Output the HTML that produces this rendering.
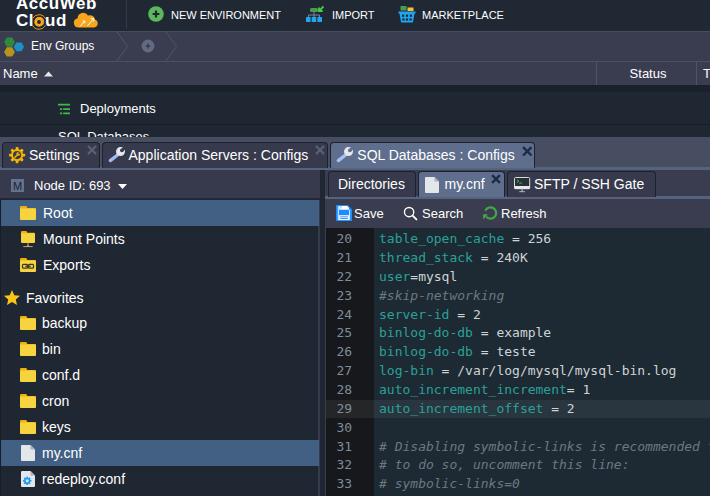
<!DOCTYPE html>
<html><head><meta charset="utf-8">
<style>
*{box-sizing:border-box;margin:0;padding:0}
html,body{width:710px;height:496px;overflow:hidden;background:#1f2832;font-family:"Liberation Sans",sans-serif;color:#fff}
.abs{position:absolute;white-space:nowrap}
svg{position:absolute;overflow:visible}
#hdr{position:absolute;left:0;top:0;width:710px;height:31px;background:#1f2833;overflow:hidden}
#hdr .div{position:absolute;left:126px;top:0;width:1px;height:29px;background:#343a4b}
.menu{position:absolute;top:9px;font-size:11px;color:#fff;white-space:nowrap}
.logo{position:absolute;left:16px;font-weight:bold;font-size:17px;line-height:17px;letter-spacing:.55px;color:#fff;white-space:nowrap;font-family:"Liberation Sans",sans-serif}
#crumb{position:absolute;left:0;top:31px;width:710px;height:30px;background:#3a3d4f;border-top:1px solid #484c60}
#thead{position:absolute;left:0;top:61px;width:710px;height:24px;background:#3a3d4f;border-top:1px solid #4b4f64}
#rows{position:absolute;left:0;top:85px;width:710px;height:52px;background:#1f2832;overflow:hidden}
#panelbar{position:absolute;left:0;top:137px;width:710px;height:33px;background:#474e62}
#panelbar .strip{position:absolute;left:0;top:30px;width:710px;height:3px;background:#56637f}
.tab{position:absolute;top:5px;height:26px;background:#363a4c;border:1px solid #1c2130;border-bottom:none;border-radius:4px 4px 0 0;font-size:14px;color:#fff;white-space:nowrap}
.tab.act{background:#5e6e8c;border-color:#1c2130}
#left{position:absolute;left:0;top:170px;width:320px;height:326px;background:#1f2733}
#lefthdr{position:absolute;left:0;top:0;width:320px;height:29px;background:#363a4c;border-bottom:1px solid #23283a}
.ti{position:absolute;left:1px;width:318px;padding-left:1px;height:26px;font-size:14px;line-height:26px;color:#fff;white-space:nowrap}
.ti.sel{background:#416084}
.ti>*{margin-left:1px}
#right{position:absolute;left:325px;top:170px;width:385px;height:326px;background:#3a3d4f}
#subbar{position:absolute;left:0;top:0;width:385px;height:29px;background:#3a3d4f}
#subbar .strip{position:absolute;left:0;top:26px;width:385px;height:3px;background:#56637f}
.stab{position:absolute;top:1px;height:26px;background:#363a4c;border:1px solid #1c2130;border-bottom:none;border-radius:4px 4px 0 0;font-size:14px;color:#fff}
.stab.act{background:#5e6e8c}
#tool{position:absolute;left:1px;top:29px;width:384px;height:29px;background:#3a3d4f;font-size:13px}
#code{position:absolute;left:1px;top:58px;width:384px;height:268px;background:#1d2a33;font-family:"DejaVu Sans Mono","Liberation Mono",monospace;font-size:13px;overflow:hidden}
#gut{position:absolute;left:0;top:0;width:48px;height:268px;background:#17181b}
.ln{position:absolute;left:0;width:384px;height:19px;line-height:19px;white-space:pre;margin-top:1px}
.ln .n{position:absolute;left:10.500px;color:#7f8d9a}
.ln .t{position:absolute;left:53px;color:#cfd3d6}
.k{color:#2aa198}.ln .c{color:#6b7883;font-style:italic}
</style></head><body>
<svg width="0" height="0" style="position:absolute"><defs>
<symbol id="fold" viewBox="0 0 16 14"><path d="M0 1.2q0-1.2 1.2-1.2h4.6q.8 0 1.2 1.2l.3.8h7.5q1.2 0 1.2 1.2v1h-16z" fill="#f2b10a"/><rect x="0" y="2.6" width="16" height="11.4" rx="1" fill="#f6d43f"/></symbol>
<symbol id="file" viewBox="0 0 14 16"><path d="M1 0h8.5l4.5 4.5v10.5q0 1-1 1h-12q-1 0-1-1v-14q0-1 1-1z" fill="#e4e7ea"/><path d="M9.5 0l4.5 4.5h-4.5z" fill="#a9afb8"/></symbol>
</defs></svg>
<!-- HEADER -->
<div id="hdr">
  <div class="logo" style="top:-5.500px">AccuWeb</div>
  <div class="logo" style="top:11.500px">Cl<span style="color:#f7a51d">o</span>ud</div>
  <svg style="left:73px;top:12px" width="26" height="16" viewBox="0 0 26 16"><path d="M5.500 15.500a4.700 4.700 0 0 1-.9-9.300a5.600 5.600 0 0 1 10.400-2.600a5 5 0 0 1 7 3.800a4.200 4.200 0 0 1-.9 8.100z" fill="#f7a51d"/><path d="M7 14.500l4.600-5.300M14.500 13.800l6-7" stroke="#fff" stroke-width=".9" fill="none"/><path d="M9.400 9h2.400v2.400M17.800 6.600h2.900v2.900" stroke="#fff" stroke-width=".9" fill="none"/></svg>
  <svg style="left:31px;top:13.700px" width="16" height="16" viewBox="0 0 16 16"><circle cx="8" cy="8" r="7.300" fill="none" stroke="#f7a51d" stroke-width=".9" stroke-dasharray="16 6.930" stroke-dashoffset="-3.500"/><circle cx="8" cy="8" r="3.300" fill="#1f2833" stroke="#f7a51d" stroke-width="2.800"/></svg>
  <div class="div"></div>
  <svg style="left:147.500px;top:6px" width="16" height="16" viewBox="0 0 16 16"><circle cx="8" cy="8" r="7.800" fill="#5cb85c"/><path d="M8 4.6v6.8M4.6 8h6.8" stroke="#1f2633" stroke-width="2.2"/></svg>
  <div class="menu" style="left:171px">NEW ENVIRONMENT</div>
  <svg style="left:305px;top:5px" width="20" height="18" viewBox="0 0 20 18"><rect x="5" y="3" width="8" height="4" rx="1.5" fill="#4f9a52"/><path d="M9 7v3M3.5 13v-3h11v3M9 10v3" stroke="#7d8597" stroke-width="1" fill="none"/><rect x="1" y="12" width="4.6" height="5" rx=".6" fill="#1fa5f2"/><rect x="6.7" y="12" width="4.6" height="5" rx=".6" fill="#1fa5f2"/><rect x="12.4" y="12" width="4.6" height="5" rx=".6" fill="#1fa5f2"/><path d="M18.5 1.5l-3.5 3.5M14 2.4v3.6h3.6" stroke="#3fd23f" stroke-width="1.8" fill="none"/></svg>
  <div class="menu" style="left:332px">IMPORT</div>
  <svg style="left:398px;top:4px" width="18" height="20" viewBox="0 0 18 20"><rect x="2.5" y="2" width="6" height="4.5" fill="#4f9a52"/><rect x="9.5" y="3.5" width="6" height="3.5" fill="#f2c230"/><path d="M.5 7.5h17v2h-1l-1.6 9h-11.8l-1.6-9h-1z" fill="#1fa5f2"/><g fill="#1f2633"><rect x="4" y="10.6" width="2.2" height="2.2"/><rect x="7.9" y="10.6" width="2.2" height="2.2"/><rect x="11.8" y="10.6" width="2.2" height="2.2"/><rect x="4.4" y="14.4" width="2.2" height="2.2"/><rect x="7.9" y="14.4" width="2.2" height="2.2"/><rect x="11.4" y="14.4" width="2.2" height="2.2"/></g></svg>
  <div class="menu" style="left:422px">MARKETPLACE</div>
</div>
<!-- BREADCRUMB -->
<div id="crumb">
  <svg style="left:3.400px;top:2.500px" width="24" height="24" viewBox="0 0 24 24"><path d="M3.8 2.5h5.4l2.7 4.6-2.7 4.6h-5.4l-2.7-4.6z" fill="#2e8b3c"/><path d="M13.3 7.4h5.2l2.6 4.4-2.6 4.4h-5.2l-2.6-4.4z" fill="#1d8fc4"/><path d="M3.8 12.3h5.4l2.7 4.6-2.7 4.6h-5.4l-2.7-4.6z" fill="#b8941e"/></svg>
  <span class="abs" style="left:31px;top:7px;font-size:12px">Env Groups</span>
  <svg style="left:115.400px;top:-1px" width="16" height="30" viewBox="0 0 16 30"><path d="M1.500 0l11 15.500-11 15" fill="none" stroke="#50546a" stroke-width="1"/></svg>
  <svg style="left:140.500px;top:7.400px" width="14" height="14" viewBox="0 0 14 14"><circle cx="7" cy="7" r="6.400" fill="#626a82"/><path d="M7 4.600v4.800M4.600 7h4.800" stroke="#2b2e3c" stroke-width="1.100"/></svg>
  <svg style="left:163.700px;top:-1px" width="16" height="30" viewBox="0 0 16 30"><path d="M1.500 0l11 15.500-11 15" fill="none" stroke="#50546a" stroke-width="1"/></svg>
</div>
<!-- GRID HEADER -->
<div id="thead">
  <span class="abs" style="left:3px;top:4px;font-size:13px">Name</span>
  <svg style="left:44px;top:9px" width="9" height="6" viewBox="0 0 9 6"><path d="M0 5.5l4.5-5 4.5 5z" fill="#e4e6ea"/></svg>
  <div class="abs" style="left:596px;top:0;width:1px;height:23px;background:#4f5368"></div>
  <span class="abs" style="left:629.600px;top:4px;font-size:13px">Status</span>
  <div class="abs" style="left:696px;top:0;width:1px;height:23px;background:#4f5368"></div>
  <span class="abs" style="left:703px;top:4px;font-size:13px">T</span>
</div>
<!-- GRID ROWS -->
<div id="rows">
  <div class="abs" style="left:0;top:0;width:710px;height:7px;background:#1b212b"></div><div class="abs" style="left:0;top:39px;width:710px;height:1px;background:#181d26"></div>
  <svg style="left:58px;top:18px" width="13" height="12" viewBox="0 0 13 12"><path d="M0 1.700h12M5.200 6.200h6.800M5.200 10.300h6.800M2 6.200h2.200M2 10.300h2.200" stroke="#44b549" stroke-width="1.700"/></svg>
  <span class="abs" style="left:80px;top:16px;font-size:13px">Deployments</span>
  <span class="abs" style="left:58px;top:44px;font-size:13px">SQL Databases</span>
</div>
<!-- PANEL TAB BAR -->
<div id="panelbar">
 <div class="strip"></div>
 <div class="tab" style="left:2px;width:98px">
   <svg style="left:5.800px;top:3.800px" width="16.200" height="16.200" viewBox="0 0 17 17"><g fill="#f7b500"><circle cx="8.5" cy="8.5" r="6.4"/><g id="tth"><rect x="7" y="0" width="3" height="17" rx=".8"/></g><use href="#tth" transform="rotate(45 8.5 8.5)"/><use href="#tth" transform="rotate(90 8.5 8.5)"/><use href="#tth" transform="rotate(135 8.5 8.5)"/></g><circle cx="8.5" cy="8.5" r="4.3" fill="#363a4c"/><path d="M5.8 11.2l3-3" stroke="#f7b500" stroke-width="1.6"/><circle cx="9.8" cy="7.2" r="2" fill="#f7b500"/><circle cx="10.6" cy="6.4" r="1" fill="#363a4c"/></svg>
   <span class="abs" style="left:26px;top:4px">Settings</span>
   <svg style="left:84px;top:2px" width="10" height="10" viewBox="0 0 10 10"><path d="M1 1l8 8M9 1l-8 8" stroke="#5a6178" stroke-width="2.200"/></svg>
 </div>
 <div class="tab" style="left:102px;width:226px">
   <svg style="left:4px;top:3px" width="18" height="18" viewBox="0 0 18 18"><path d="M3.300 14.600l7.200-5.600" stroke="#9dbcf0" stroke-width="3.300" stroke-linecap="round"/><circle cx="13.500" cy="5.600" r="4.500" fill="#e6e8ec"/><circle cx="14.900" cy="4.300" r="1.900" fill="#363a4c"/><path d="M14.900 4.300l4 -3.600" stroke="#363a4c" stroke-width="2.700"/></svg>
   <span class="abs" style="left:25.500px;top:4px">Application Servers : Configs</span>
   <svg style="left:212px;top:2px" width="10" height="10" viewBox="0 0 10 10"><path d="M1 1l8 8M9 1l-8 8" stroke="#5a6178" stroke-width="2.200"/></svg>
 </div>
 <div class="tab act" style="left:330px;width:205px">
   <svg style="left:4.400px;top:3px" width="18" height="18" viewBox="0 0 18 18"><path d="M3.300 14.600l7.200-5.600" stroke="#a4c2f4" stroke-width="3.300" stroke-linecap="round"/><circle cx="13.500" cy="5.600" r="4.500" fill="#e6e8ec"/><circle cx="14.900" cy="4.300" r="1.900" fill="#5e6e8c"/><path d="M14.900 4.300l4 -3.600" stroke="#5e6e8c" stroke-width="2.700"/></svg>
   <span class="abs" style="left:26.300px;top:4px">SQL Databases : Configs</span>
   <svg style="left:190.500px;top:2.600px" width="10.600" height="10.600" viewBox="0 0 10 10"><path d="M1 1l8 8M9 1l-8 8" stroke="#1d2a45" stroke-width="2.200"/></svg>
 </div>
</div>
<!-- LEFT TREE -->
<div id="left"><div class="abs" style="left:0;top:29px;width:1px;height:297px;background:#171c25"></div>
 <div id="lefthdr">
   <svg style="left:11px;top:9px" width="13" height="13" viewBox="0 0 13 13"><rect width="13" height="13" fill="#64728f"/></svg>
   <span class="abs" style="left:12.900px;top:9.500px;font-size:11px;color:#1a212c">M</span>
   <span class="abs" style="left:34px;top:8px;font-size:13px">Node ID: 693</span>
   <svg style="left:117.500px;top:13.500px" width="9" height="5" viewBox="0 0 9 5"><path d="M0 0h9l-4.500 5z" fill="#fff"/></svg>
 </div>
 <div class="abs" style="left:318px;top:30px;width:2px;height:296px;background:#363a4c"></div>
 <div class="ti sel" style="top:30px"><svg style="left:18px;top:6px" width="16" height="14"><use href="#fold" width="16" height="14"/></svg><span class="abs" style="left:41px">Root</span></div>
 <div class="ti" style="top:56px"><svg style="left:19px;top:5px" width="14" height="17" viewBox="0 0 14 17"><path d="M0 1q0-1 1-1h4q.7 0 1 1l.3.7h6.7q1 0 1 1v1h-14z" fill="#f2b10a"/><rect x="0" y="2.2" width="14" height="9.8" rx="1" fill="#f6d43f"/><path d="M7 12v2.500" stroke="#b9a24a" stroke-width="1"/><path d="M2.300 15.600h9.400" stroke="#aeb4bd" stroke-width=".9"/><path d="M7 13.600l1.900 2.500h-3.800z" fill="#f2a20a"/></svg><span class="abs" style="left:41px">Mount Points</span></div>
 <div class="ti" style="top:82px"><svg style="left:18px;top:6px" width="16" height="14"><use href="#fold" width="16" height="14"/><g fill="none" stroke="#3b3a2a" stroke-width="1.300"><rect x="2.500" y="6.300" width="5" height="3.800" rx=".9"/><rect x="8.500" y="6.300" width="5" height="3.800" rx=".9"/><path d="M5.300 8.200h5.400"/></g></svg><span class="abs" style="left:41px">Exports</span></div>
 <div class="ti" style="top:115px"><svg style="left:2px;top:5.200px" width="16" height="15" viewBox="0 0 16 15"><path d="M8 0l2.3 5.2 5.7.6-4.2 3.8 1.2 5.4-5-2.9-5 2.9 1.200-5.4-4.200-3.800 5.700-.6z" fill="#fcc419"/></svg><span class="abs" style="left:24px">Favorites</span></div>
 <div class="ti" style="top:140px"><svg style="left:18px;top:6px" width="16" height="14"><use href="#fold" width="16" height="14"/></svg><span class="abs" style="left:40px">backup</span></div>
 <div class="ti" style="top:166px"><svg style="left:18px;top:6px" width="16" height="14"><use href="#fold" width="16" height="14"/></svg><span class="abs" style="left:40px">bin</span></div>
 <div class="ti" style="top:192px"><svg style="left:18px;top:6px" width="16" height="14"><use href="#fold" width="16" height="14"/></svg><span class="abs" style="left:40px">conf.d</span></div>
 <div class="ti" style="top:218px"><svg style="left:18px;top:6px" width="16" height="14"><use href="#fold" width="16" height="14"/></svg><span class="abs" style="left:40px">cron</span></div>
 <div class="ti" style="top:244px"><svg style="left:18px;top:6px" width="16" height="14"><use href="#fold" width="16" height="14"/></svg><span class="abs" style="left:40px">keys</span></div>
 <div class="ti sel" style="top:270px"><svg style="left:19px;top:5px" width="14" height="16"><use href="#file" width="14" height="16"/></svg><span class="abs" style="left:40px">my.cnf</span></div>
 <div class="ti" style="top:296px"><svg style="left:19px;top:5px" width="14" height="16"><use href="#file" width="14" height="16"/><g transform="translate(6.200 9.800)"><g fill="#1e9bf0"><circle r="3.100"/><rect x="-.85" y="-4.200" width="1.700" height="8.400"/><rect x="-.85" y="-4.200" width="1.700" height="8.400" transform="rotate(45)"/><rect x="-.85" y="-4.200" width="1.700" height="8.400" transform="rotate(90)"/><rect x="-.85" y="-4.200" width="1.700" height="8.400" transform="rotate(135)"/></g><circle r="1.500" fill="#e4e7ea"/></g></svg><span class="abs" style="left:40px">redeploy.conf</span></div>
</div>
<!-- RIGHT PANEL -->
<div id="right">
 <div id="subbar"><div class="strip"></div>
  <div class="stab" style="left:3px;width:88px"><span class="abs" style="left:9px;top:4px">Directories</span></div>
  <div class="stab act" style="left:93px;width:87px"><svg style="left:6px;top:5px" width="14" height="16"><use href="#file" width="14" height="16"/></svg><span class="abs" style="left:25.500px;top:4px">my.cnf</span><svg style="left:72.300px;top:2.400px" width="10" height="10" viewBox="0 0 9 9"><path d="M1 1l7 7M8 1l-7 7" stroke="#1d2a45" stroke-width="2.100"/></svg></div>
  <div class="stab" style="left:182px;width:149px"><svg style="left:6px;top:5px" width="17" height="16" viewBox="0 0 17 16"><rect x=".5" y=".5" width="15.200" height="11.200" rx="1.200" fill="#2b3038" stroke="#d5d8dc" stroke-width="1"/><rect x=".3" y="9" width="15.600" height="2.900" rx=".6" fill="#e6e7e9"/><path d="M8.100 11.800v2.700" stroke="#9a9ea6" stroke-width="1.500"/><path d="M5.300 14.700h5.600" stroke="#b5b8be" stroke-width="1"/><path d="M2.900 2.600l2 1.500-2 1.500M5.300 6.100h2.600" stroke="#3bd23b" stroke-width=".9" fill="none"/></svg><span class="abs" style="left:26px;top:4px">SFTP / SSH Gate</span></div>
 </div>
 <div id="tool">
  <svg style="left:10px;top:6px" width="16" height="16" viewBox="0 0 16 16"><path d="M0 .6q0-.6.6-.6h11.200l4.200 4.200v11.200q0 .6-.6.600h-14.800q-.6 0-.6-.6z" fill="#1a8cff"/><path d="M2.300 1.200v13.400h11.300v-10" fill="none" stroke="#fff" stroke-width=".9"/><path d="M3.200 1h8l1.700 1.700v2h-9.700z" fill="#fff"/><rect x="4.200" y="1.300" width="1.300" height="2.300" fill="#9ccbff"/><rect x="3.200" y="10.200" width="9.700" height="4.600" fill="#fff"/><path d="M4.200 11.800h7.700M4.200 13.500h7.700" stroke="#1a8cff" stroke-width=".9"/></svg>
  <span class="abs" style="left:28px;top:7px">Save</span>
  <svg style="left:77px;top:7px" width="15" height="15" viewBox="0 0 15 15"><circle cx="6.100" cy="6.100" r="4.650" fill="none" stroke="#fff" stroke-width="1.350"/><path d="M9.600 9.600l3.800 3.800" stroke="#fff" stroke-width="1.900" stroke-linecap="round"/></svg>
  <span class="abs" style="left:96px;top:7px">Search</span>
  <svg style="left:157px;top:6px" width="16" height="16" viewBox="0 0 16 16"><path d="M2.330 5.600A5.700 5.700 0 1 1 3.130 11.660" fill="none" stroke="#46a546" stroke-width="2.200"/><path d="M.1 9.200h4.900l-4.900 5.300z" fill="#46a546"/></svg>
  <span class="abs" style="left:175px;top:7px">Refresh</span>
 </div>
 <div id="code"><div id="gut"></div>
  <div class="ln" style="top:0"><span class="n">20</span><span class="t"><span class="k">table_open_cache</span> = 256</span></div>
  <div class="ln" style="top:19px"><span class="n">21</span><span class="t"><span class="k">thread_stack</span> = 240K</span></div>
  <div class="ln" style="top:38px"><span class="n">22</span><span class="t"><span class="k">user</span>=mysql</span></div>
  <div class="ln" style="top:57px"><span class="n">23</span><span class="t c">#skip-networking</span></div>
  <div class="ln" style="top:76px"><span class="n">24</span><span class="t"><span class="k">server-id</span> = 2</span></div>
  <div class="ln" style="top:94px"><span class="n">25</span><span class="t"><span class="k">binlog-do-db</span> = example</span></div>
  <div class="ln" style="top:113px"><span class="n">26</span><span class="t"><span class="k">binlog-do-db</span> = teste</span></div>
  <div class="ln" style="top:132px"><span class="n">27</span><span class="t"><span class="k">log-bin</span> = /var/log/mysql/mysql-bin.log</span></div>
  <div class="ln" style="top:151px"><span class="n">28</span><span class="t"><span class="k">auto_increment_increment</span>= 1</span></div>
  <div class="ln" style="top:171px;height:18px;line-height:17px;background:#29363f"><div class="abs" style="left:0;top:0;width:48px;height:18px;background:#252628"></div><span class="n">29</span><span class="t"><span class="k">auto_increment_offset</span> = 2</span></div>
  <div class="ln" style="top:189px"><span class="n">30</span></div>
  <div class="ln" style="top:208px"><span class="n">31</span><span class="t c"># Disabling symbolic-links is recommended to prevent assorted security risks;</span></div>
  <div class="ln" style="top:226px"><span class="n">32</span><span class="t c"># to do so, uncomment this line:</span></div>
  <div class="ln" style="top:245px"><span class="n">33</span><span class="t c"># symbolic-links=0</span></div>
 </div>
</div>
</body></html>
